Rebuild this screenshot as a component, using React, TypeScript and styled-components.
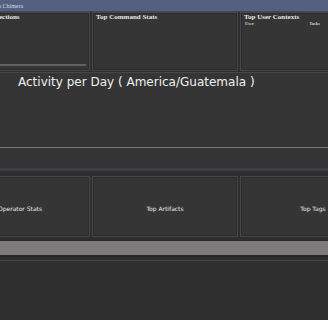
import React from 'react';
import styled, { createGlobalStyle } from 'styled-components';

const Global = createGlobalStyle`
  html, body { margin: 0; padding: 0; background: #2e2e2e; overflow: hidden; }
  body { font-family: "Liberation Sans", Arial, sans-serif; }
`;

const Page = styled.div`
  width: 436px;
  margin-left: -50px;
  display: flex;
  flex-direction: column;
`;

const TopBar = styled.div`
  height: 11px;
  background: #536080;
  border-bottom: 1px solid #3e4760;
  display: flex;
  align-items: center;
  padding-left: 27px;
  font-family: "Liberation Serif", serif;
  font-size: 6px;
  color: #d8dce8;
`;

const Row = styled.div<{ $h: number; $top?: number }>`
  display: grid;
  grid-template-columns: 140px 146px 146px;
  gap: 2px;
  height: ${p => p.$h}px;
  margin-top: ${p => p.$top ?? 0}px;
`;

const Card = styled.div<{ $center?: boolean }>`
  background: #353535;
  border: 1px solid #474747;
  box-shadow: inset 0 0 0 1px #2c2c2c;
  display: flex;
  flex-direction: column;
  padding: 1px 3px 3px;
  box-sizing: border-box;
  ${p => p.$center ? 'align-items: center; justify-content: center; padding: 4px 3px 0;' : ''}
`;

const CardTitle = styled.div`
  font-family: "Liberation Serif", serif;
  font-weight: bold;
  font-size: 7px;
  color: #e8e8e8;
  line-height: 7px;
`;

const SubHead = styled.div`
  display: flex;
  justify-content: space-between;
  font-family: "Liberation Serif", serif;
  font-weight: bold;
  font-size: 4.5px;
  color: #cfcfcf;
  padding: 0 62px 0 1px;
`;

const Scrollbar = styled.div`
  margin-top: auto;
  height: 2px;
  background: #626262;
  margin-bottom: 1px;
`;

const CenterLabel = styled.div`
  font-size: 6px;
  color: #ececec;
  font-family: "DejaVu Sans", Verdana, sans-serif;
`;

const Activity = styled.div`
  margin-top: 1px;
  height: 95px;
  background: #353535;
  border-top: 1px solid #474747;
  border-bottom: 3px solid #3b3f47;
  display: flex;
  flex-direction: column;
`;

const ActivityTitle = styled.div`
  padding: 1px 0 0 68px;
  font-family: "DejaVu Sans", Verdana, sans-serif;
  font-size: 12px;
  color: #f0f0f0;
  line-height: 16px;
`;

const Axis = styled.div`
  margin-top: 57px;
  height: 1px;
  background: #7a7a7a;
`;

const GrayBar = styled.div`
  margin-top: 3px;
  height: 14px;
  background: #7e7a7b;
  border-top: 1px solid #2a2a2a;
  border-bottom: 2px solid #262626;
`;

const Footer = styled.div`
  margin-top: 3px;
  border-top: 1px solid #454545;
  height: 80px;
  background: #2f2f2f;
`;

export default function App() {
  return (
    <>
      <Global />
      <Page>
        <TopBar>Operation Chimera</TopBar>
        <Row $h={59}>
          <Card>
            <CardTitle>Callback Connections</CardTitle>
            <Scrollbar />
          </Card>
          <Card>
            <CardTitle>Top Command Stats</CardTitle>
          </Card>
          <Card>
            <CardTitle>Top User Contexts</CardTitle>
            <SubHead><span>User</span><span>Tasks</span></SubHead>
          </Card>
        </Row>
        <Activity>
          <ActivityTitle>Activity per Day ( America/Guatemala )</ActivityTitle>
          <Axis />
        </Activity>
        <Row $h={61} $top={5}>
          <Card $center><CenterLabel>Operator Stats</CenterLabel></Card>
          <Card $center><CenterLabel>Top Artifacts</CenterLabel></Card>
          <Card $center><CenterLabel>Top Tags</CenterLabel></Card>
        </Row>
        <GrayBar />
        <Footer />
      </Page>
    </>
  );
}
